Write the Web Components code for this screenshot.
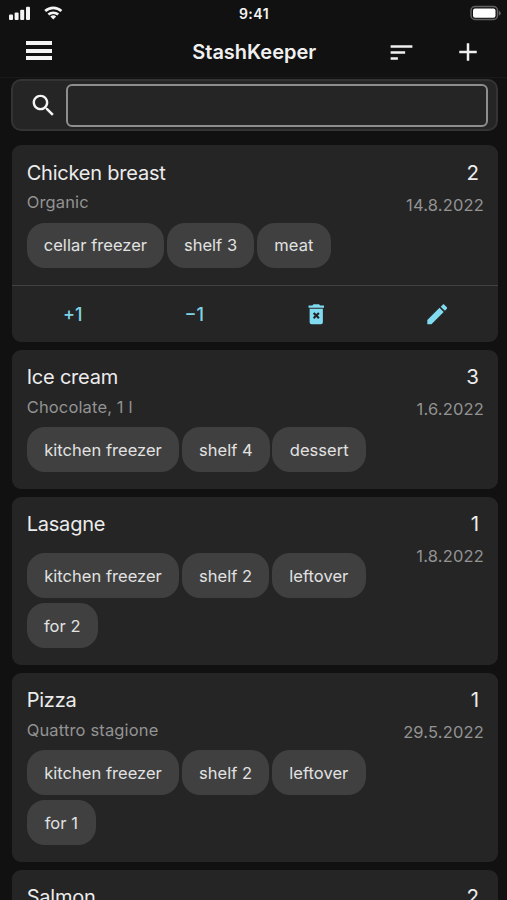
<!DOCTYPE html>
<html lang="en">
<head>
<meta charset="utf-8">
<title>StashKeeper</title>
<style>
html,body{margin:0;height:100%;background:#111}
body{overflow:hidden;font-family:Inter,"Liberation Sans",sans-serif}
</style>
</head>
<body>
<stash-app></stash-app>
<script>
const define = (name, html, setup) => {
  const t = document.createElement('template');
  t.innerHTML = html;
  customElements.define(name, class extends HTMLElement {
    constructor() {
      super();
      this.attachShadow({ mode: 'open' }).appendChild(t.content.cloneNode(true));
    }
    connectedCallback() { if (setup) setup(this, this.shadowRoot); }
  });
};

const ICONS = {
  search: 'M15.5 14h-.79l-.28-.27C15.41 12.59 16 11.11 16 9.5 16 5.91 13.09 3 9.5 3S3 5.91 3 9.5 5.91 16 9.5 16c1.61 0 3.09-.59 4.23-1.57l.27.28v.79l5 4.99L20.49 19l-4.99-5zm-6 0C7.01 14 5 11.99 5 9.5S7.01 5 9.5 5 14 7.01 14 9.5 11.99 14 9.5 14z',
  sort: 'M3 18h6v-2H3v2zM3 6v2h18V6H3zm0 7h12v-2H3v2z',
  add: 'M19 13h-6v6h-2v-6H5v-2h6V5h2v6h6v2z',
  trash: 'M6 19.2c0 1 .8 1.8 1.8 1.8h8.4c1 0 1.8-.8 1.8-1.8V7H6v12.2zm2.9-7.7l1.4-1.4 1.7 1.7 1.7-1.7 1.4 1.4-1.7 1.7 1.7 1.7-1.4 1.4-1.7-1.7-1.7 1.7-1.4-1.4 1.7-1.7-1.7-1.7zM15.5 4l-1-1h-5l-1 1H5v2h14V4z',
  edit: 'M3 17.25V21h3.75L17.81 9.94l-3.75-3.75L3 17.25zM20.71 7.04c.39-.39.39-1.02 0-1.41l-2.34-2.34c-.39-.39-1.02-.39-1.41 0l-1.83 1.83 3.75 3.75 1.83-1.83z'
};

define('app-icon', `<style>:host{display:block;flex:none;width:var(--size,29px);height:var(--size,29px)}svg{display:block;width:100%;height:100%;fill:currentColor}</style><svg viewBox="0 0 24 24"><path/></svg>`,
  (el, root) => root.querySelector('path').setAttribute('d', ICONS[el.getAttribute('name')]));

define('status-bar', `<style>
:host{display:grid;grid-template-columns:1fr auto 1fr;align-items:start;flex:none;height:27px;padding:0 6px 0 8px;color:#f4f4f4}
svg{display:block}
.time{font-size:14px;font-weight:600;line-height:27px;letter-spacing:.5px;margin-right:1px}
.battery{justify-self:end}
</style>
<svg width="60" height="27" fill="#f4f4f4">
<rect x="1" y="14.6" width="4" height="5.4" rx="1"/><rect x="6.6" y="12.4" width="4" height="7.6" rx="1"/><rect x="12.2" y="9.7" width="4" height="10.3" rx="1"/><rect x="18" y="6.8" width="4" height="13.2" rx="1"/>
<g fill="none" stroke="#f4f4f4" stroke-width="2.7"><path d="M37.2 11a12 12 0 0 1 16.2 0"/><path d="M40.4 14.6a7.4 7.4 0 0 1 9.8 0"/></g><path d="M42.4 16.6a4.4 4.4 0 0 1 5.8 0L45.3 19.6z"/>
</svg>
<span class="time">9:41</span>
<svg class="battery" width="34" height="27"><rect x="4" y="6.5" width="26.5" height="13" rx="4" fill="none" stroke="#626262" stroke-width="1.5"/><rect x="6" y="8.5" width="22.5" height="9.2" rx="2" fill="#fff"/><path d="M31.8 10.8q2 .6 2 2.4t-2 2.4z" fill="#626262"/></svg>`);

define('top-bar', `<style>
:host{display:grid;grid-template-columns:1fr auto 1fr;align-items:center;flex:none;height:50px;padding:0 24.5px 0 26px;border-bottom:1px solid #191919;color:#f0f0f0}
.menu{display:flex;flex-direction:column;gap:3.5px;margin-bottom:3px}
.menu i{width:26.3px;height:4px;background:#f4f4f4}
h1{margin:0;font-size:20px;font-weight:600;line-height:26px}
.tools{display:flex;justify-content:flex-end;align-items:center;gap:36.5px}
</style>
<div class="menu"><i></i><i></i><i></i></div><h1><slot></slot></h1>
<div class="tools"><app-icon name="sort"></app-icon><app-icon name="add" style="--size:30px"></app-icon></div>`);

define('search-bar', `<style>
:host{display:flex;align-items:center;flex:none;box-sizing:border-box;margin:1px 9.5px 0 11px;height:52px;border:2px solid #343434;border-radius:10px;background:#252525;padding:0 8px 0 16px;color:#f4f4f4}
.field{flex:1;box-sizing:border-box;height:43px;margin:0 0 0 7.5px;border:2px solid #8e8e8e;border-radius:6px}
</style><app-icon name="search"></app-icon><div class="field"></div>`);

define('tag-chip', `<style>:host{display:flex;align-items:center;justify-content:center;box-sizing:border-box;height:45px;border-radius:18px;background:#404040;color:#e2e2e2;font-size:16.5px;letter-spacing:.03px;white-space:nowrap}</style><slot></slot>`);

define('stash-actions', `<style>
:host{display:grid;grid-template-columns:repeat(4,1fr);align-items:center;justify-items:center;height:56px;border-top:1px solid #414141;color:#7dd4e6;font-size:18px;font-weight:500}
app-icon{--size:26.5px;color:#80daf0}
</style><span>+1</span><span>−1</span><app-icon name="trash"></app-icon><app-icon name="edit"></app-icon>`);

define('stash-card', `<style>
:host{display:block;box-sizing:border-box;border-radius:9px;background:#252525;overflow:hidden;flex:none}
.main{display:grid;grid-template-columns:1fr auto;padding:13.5px 14px 17.5px 14.7px}
h2,p{margin:0;font-weight:400;white-space:nowrap}
h2{font-size:20px;line-height:28px;letter-spacing:-.22px;color:#ececec}
.note{font-size:16.5px;line-height:24px;margin-top:3.5px;letter-spacing:.15px;color:#939393}
.note:empty{height:0;margin:0}
.side{text-align:right}
.count{font-size:20.5px;line-height:28px;color:#ececec;padding-right:5px}
.date{font-size:16.5px;line-height:24px;margin-top:6px;letter-spacing:.17px;color:#939393;height:18px}
.text{min-height:50px}
.tags{grid-column:1/3;display:flex;flex-wrap:wrap;gap:5px 2.5px;margin-top:8.5px;width:400px}
:host([plain]) .tags{margin-top:-9px}
</style>
<div class="main"><div class="text"><h2></h2><p class="note"></p></div>
<div class="side"><p class="count"></p><p class="date"></p></div>
<div class="tags"><slot></slot></div></div><slot name="actions"></slot>`,
  (el, root) => {
    for (const [sel, attr] of [['h2', 'name'], ['.note', 'note'], ['.count', 'count'], ['.date', 'date']])
      root.querySelector(sel).textContent = el.getAttribute(attr) || '';
  });

define('stash-app', `<style>
:host{display:flex;flex-direction:column;width:507px;height:900px;overflow:hidden;background:#111}
main{display:flex;flex-direction:column;gap:7.5px;padding:14px 9px 0 12px}
</style>
<status-bar></status-bar><top-bar>StashKeeper</top-bar><search-bar></search-bar>
<main>
<stash-card name="Chicken breast" note="Organic" count="2" date="14.8.2022" style="height:197px"><tag-chip style="width:137.5px">cellar freezer</tag-chip><tag-chip style="width:87.7px">shelf 3</tag-chip><tag-chip style="width:74px">meat</tag-chip><stash-actions slot="actions"></stash-actions></stash-card>
<stash-card name="Ice cream" note="Chocolate, 1 l" count="3" date="1.6.2022" style="height:139.5px"><tag-chip style="width:152.7px">kitchen freezer</tag-chip><tag-chip style="width:88px">shelf 4</tag-chip><tag-chip style="width:93.7px">dessert</tag-chip></stash-card>
<stash-card plain name="Lasagne" count="1" date="1.8.2022" style="height:168.5px"><tag-chip style="width:152.7px">kitchen freezer</tag-chip><tag-chip style="width:87.3px">shelf 2</tag-chip><tag-chip style="width:94.3px">leftover</tag-chip><tag-chip style="width:71px">for 2</tag-chip></stash-card>
<stash-card name="Pizza" note="Quattro stagione" count="1" date="29.5.2022" style="height:189.5px"><tag-chip style="width:152.7px">kitchen freezer</tag-chip><tag-chip style="width:87.3px">shelf 2</tag-chip><tag-chip style="width:94.3px">leftover</tag-chip><tag-chip style="width:69.3px">for 1</tag-chip></stash-card>
<stash-card name="Salmon" count="2" style="height:140px"></stash-card>
</main>`);
</script>
</body>
</html>
